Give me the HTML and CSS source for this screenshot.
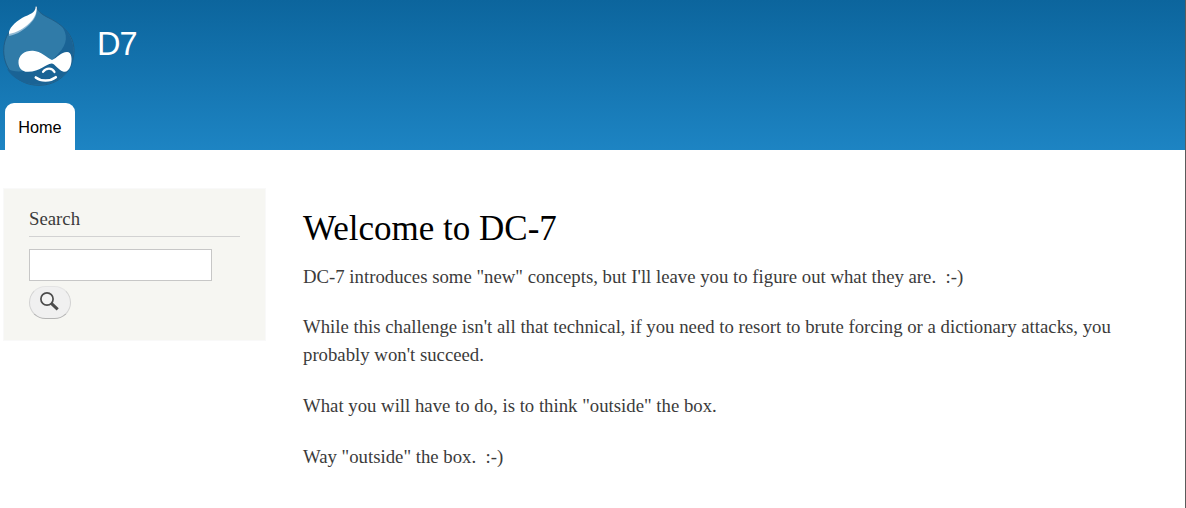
FILE: index.html
```html
<!DOCTYPE html>
<html lang="en">
<head>
<meta charset="utf-8">
<title>Welcome to DC-7 | D7</title>
<link rel="stylesheet" href="styles.css">
</head>
<body>
<div class="page">
  <header class="header">
    <div class="branding">
      <svg class="logo" width="74" height="82" viewBox="2 5 74 82" aria-label="Home">
        <path d="M36.2 6.200C38.500 12.500 43 15 49 18C63 25 74 35 74 50.500C74 71.500 58 85.300 39 85.300C18 85.300 3.700 70 3.700 50.500C3.700 37 11 27 21 20C29 15 36.500 13 36.200 6.200Z" fill="#307ba8" stroke="#1f5e88" stroke-width="1"/>
        <path d="M61 25C69 32 73.600 41 73.600 51C73.600 72 57 84.800 39 84.800C24 84.800 12 78 7 69C12 71 17 72 24 71C38 71 50 64 58 54C68 44 68 34 61 25Z" fill="#1a6395"/>
        <path d="M36.400 7.500C37.500 14 35 19 30 24C24 30 17 34.500 9.200 36C7.500 31 15 24 21 20C29 15 36 14 36.400 7.500Z" fill="#8fb9d4"/>
        <path d="M35.700 6.500L36.800 6.800C36.700 13 34.500 18.500 29.500 23C24 28.500 17 32.500 9 34C8 29 15 22 22 18C30 14 35.500 13 35.700 6.500Z" fill="#fff"/>
        <path d="M18.500 63C18 55 25 50.300 33 50.700C41 51 47 58 52 60C57 58 61 52 67 52C72 52 72.500 60 70.500 66C69 70.500 66 72.500 63 71.500C58 70 55 63.500 51.500 63.500C46 64 40 71.500 28 71.800C22 72 18.800 68 18.500 63Z" fill="#fff"/>
        <path d="M43 71.800C46 67.800 52 67.300 54.500 72" fill="none" stroke="#fff" stroke-width="2.200" stroke-linecap="round"/>
        <path d="M35.800 77.500C41 81.600 50 81.600 55.800 77.200" fill="none" stroke="#fff" stroke-width="2.600" stroke-linecap="round"/>
      </svg>
      <div class="site-name">D7</div>
    </div>
    <nav class="menu"><a class="tab">Home</a></nav>
  </header>
  <div class="columns">
    <aside class="sidebar">
      <h2 class="block-title">Search</h2>
      <form class="search">
        <input class="search-input" type="text" aria-label="Search">
        <button class="search-button" type="button" aria-label="Search">
          <svg class="search-icon" width="20" height="20" viewBox="0 0 20 20">
            <circle cx="7" cy="7" r="6.100" fill="#f4f4f4" stroke="#4c4c4c" stroke-width="1.700"/>
            <path d="M11.300 11.300L17.700 17.400" stroke="#4c4c4c" stroke-width="3"/>
          </svg>
        </button>
      </form>
    </aside>
    <main class="content">
      <h1 class="title">Welcome to DC-7</h1>
      <p class="text">DC-7 introduces some "new" concepts, but I'll leave you to figure out what they are.&nbsp; :-)</p>
      <p class="text">While this challenge isn't all that technical, if you need to resort to brute forcing or a dictionary attacks, you probably won't succeed.</p>
      <p class="text">What you will have to do, is to think "outside" the box.</p>
      <p class="text">Way "outside" the box.&nbsp; :-)</p>
    </main>
  </div>
</div>
</body>
</html>
```
FILE: styles.css
```css
* {
  box-sizing: border-box;
}

body {
  margin: 0;
  background: #fff;
  font-family: "Liberation Serif", serif;
  font-size: 18.75px;
  line-height: 28.13px;
  color: #3b3b3b;
}

.page {
  height: 508px;
  border-right: 1px solid #5b5b5b;
  overflow: hidden;
}

.header {
  height: 150px;
  display: flex;
  flex-direction: column;
  justify-content: space-between;
  background: linear-gradient(#0c659d, #1d84c3);
  font-family: "Liberation Sans", sans-serif;
}

.branding {
  display: flex;
  padding: 5px 0 0 2px;
}

.logo {
  display: block;
}

.site-name {
  margin: 21px 0 0 21px;
  font-size: 32.5px;
  line-height: 36px;
  letter-spacing: -1px;
  color: #fff;
}

.menu {
  display: flex;
  padding-left: 5px;
}

.tab {
  width: 70px;
  height: 47px;
  border-radius: 9px 9px 0 0;
  background: #fff;
  color: #000;
  font-size: 16.25px;
  line-height: 49px;
  text-align: center;
}

.columns {
  display: flex;
  align-items: flex-start;
  gap: 37px;
  padding: 38px 0 0 3px;
}

.sidebar {
  width: 263px;
  height: 153px;
  padding: 16px 25px 0;
  border: 1px solid #f9f9f9;
  background: #f6f6f2;
}

.block-title {
  height: 32px;
  margin: 0 0 12px;
  border-bottom: 1px solid #d2d2d2;
  font-size: 18.75px;
  font-weight: normal;
  line-height: 28px;
}

.search {
  display: flex;
  flex-direction: column;
  gap: 5px;
}

.search-input {
  width: 183px;
  height: 32px;
  border: 1px solid #c7c7c7;
  background: #fff;
}

.search-button {
  width: 42px;
  height: 33px;
  display: flex;
  padding: 5px 0 0 10px;
  border: 1px solid;
  border-color: #e4e4e4 #d2d2d2 #b4b4b4;
  border-radius: 17px;
  background: #f0f0f0;
}

.content {
  width: 845px;
  padding-top: 20px;
}

.title {
  margin: 0 0 12.7px;
  font-size: 35px;
  font-weight: normal;
  line-height: 42px;
  color: #000;
}

.text {
  margin: 0 0 22.5px;
}
```
